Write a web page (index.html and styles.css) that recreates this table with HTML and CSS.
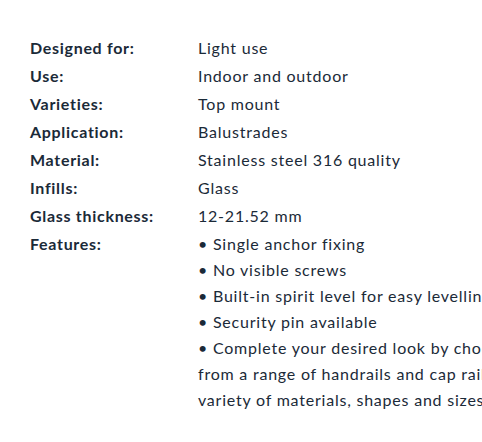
FILE: index.html
```html
<!DOCTYPE html>
<html lang="en">
<head>
  <meta charset="UTF-8" />
  <meta name="viewport" content="width=device-width, initial-scale=1.0" />
  <title>Specifications</title>
  <link rel="stylesheet" href="styles.css">
</head>
<body>
  <main class="specs">
    <table class="spec-table">
      <tr><th>Designed for:</th><td>Light use</td></tr>
      <tr><th>Use:</th><td>Indoor and outdoor</td></tr>
      <tr><th>Varieties:</th><td>Top mount</td></tr>
      <tr><th>Application:</th><td>Balustrades</td></tr>
      <tr><th>Material:</th><td>Stainless steel 316 quality</td></tr>
      <tr><th>Infills:</th><td>Glass</td></tr>
      <tr><th>Glass thickness:</th><td>12-21.52 mm</td></tr>
      <tr>
        <th>Features:</th>
        <td>
          &bull; Single anchor fixing<br>
          &bull; No visible screws<br>
          &bull; Built-in spirit level for easy levelling<br>
          &bull; Security pin available<br>
          &bull; Complete your desired look by choosing from a range of handrails and cap rails in a variety of materials, shapes and sizes.
        </td>
      </tr>
    </table>
  </main>
</body>
</html>
```

FILE: styles.css
```css
html {
  overflow: hidden;
}

body {
  margin: 0;
  font-family: Lato, "Open Sans", sans-serif;
  color: #1b2a38;
  background: #ffffff;
}

.specs {
  width: 600px;
  padding: 34px 0 0 30px;
}

.spec-table {
  border-collapse: collapse;
  font-size: 16px;
  letter-spacing: 0.7px;
  line-height: 26px;
}

.spec-table th,
.spec-table td {
  padding: 1px 0;
  vertical-align: top;
  text-align: left;
}

.spec-table th {
  width: 168px;
  font-weight: 700;
}

.spec-table td {
  width: 334px;
  font-weight: 400;
  letter-spacing: 0.78px;
}
```
